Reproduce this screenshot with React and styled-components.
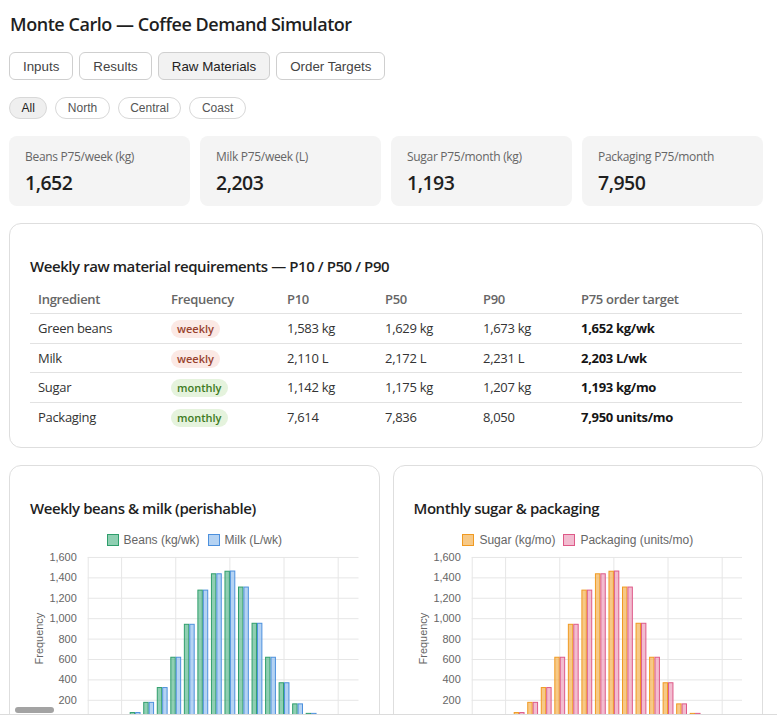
import styled, { createGlobalStyle } from "styled-components";
import { useState } from "react";

const GlobalStyle = createGlobalStyle`
  body {
    margin: 0;
    background: #fff;
    font-family: "Open Sans", "Noto Sans", sans-serif;
    color: #222;
  }
`;

const TABS = ["Inputs", "Results", "Raw Materials", "Order Targets"];
const REGIONS = ["All", "North", "Central", "Coast"];

const STATS = [
  { label: "Beans P75/week (kg)", value: "1,652" },
  { label: "Milk P75/week (L)", value: "2,203" },
  { label: "Sugar P75/month (kg)", value: "1,193" },
  { label: "Packaging P75/month", value: "7,950" },
];

const ROWS = [
  { name: "Green beans", freq: "weekly", p10: "1,583 kg", p50: "1,629 kg", p90: "1,673 kg", target: "1,652 kg/wk" },
  { name: "Milk", freq: "weekly", p10: "2,110 L", p50: "2,172 L", p90: "2,231 L", target: "2,203 L/wk" },
  { name: "Sugar", freq: "monthly", p10: "1,142 kg", p50: "1,175 kg", p90: "1,207 kg", target: "1,193 kg/mo" },
  { name: "Packaging", freq: "monthly", p10: "7,614", p50: "7,836", p90: "8,050", target: "7,950 units/mo" },
];

// histogram counts per bin (20 bins)
const BINS_A = [0, 0, 15, 80, 180, 325, 622, 945, 1280, 1440, 1465, 1310, 955, 622, 372, 165, 72, 0, 0, 0];
const BINS_B = [0, 0, 15, 80, 180, 325, 622, 945, 1280, 1440, 1467, 1310, 955, 622, 372, 165, 72, 0, 0, 0];

const SERIES = {
  beans: { label: "Beans (kg/wk)", fill: "rgba(75,178,130,0.62)", stroke: "#2f9e6c" },
  milk: { label: "Milk (L/wk)", fill: "rgba(150,192,238,0.7)", stroke: "#4c90dd" },
  sugar: { label: "Sugar (kg/mo)", fill: "rgba(244,178,84,0.7)", stroke: "#f09a22" },
  packaging: { label: "Packaging (units/mo)", fill: "rgba(236,160,188,0.7)", stroke: "#de5a88" },
};

const AXIS_FONT = "'Liberation Sans', Arial, sans-serif";

function Histogram({ a, b }) {
  const W = 330;
  const left = 58;
  const right = 330;
  const top = 8;
  const plotH = 164;
  const max = 1600;
  const n = BINS_A.length;
  const cat = (right - left) / n;
  const y = (v) => top + plotH - (v / max) * plotH;
  const ticks = [0, 200, 400, 600, 800, 1000, 1200, 1400, 1600];
  const vlines = [2, 6, 10, 14, 18].map((i) => left + (i + 0.5) * cat);

  return (
    <svg width="100%" height="200" viewBox={`0 0 ${W} 200`} preserveAspectRatio="xMinYMin meet">
      {ticks.map((t) => (
        <g key={t}>
          <line x1={left} x2={right} y1={y(t) + 0.5} y2={y(t) + 0.5} stroke="#e6e6e6" strokeWidth="1" />
          <text x={left - 11} y={y(t) + 4} fontSize="11" fill="#666" textAnchor="end" fontFamily={AXIS_FONT}>
            {t.toLocaleString("en-US")}
          </text>
        </g>
      ))}
      <line x1={left + 0.5} x2={left + 0.5} y1={top} y2={top + plotH} stroke="#e6e6e6" />
      {vlines.map((x) => (
        <line key={x} x1={x} x2={x} y1={top} y2={top + plotH} stroke="#e6e6e6" />
      ))}

      <text
        transform={`translate(13 ${top + 82}) rotate(-90)`}
        fontSize="11"
        fill="#666"
        textAnchor="middle"
        fontFamily={AXIS_FONT}
      >
        Frequency
      </text>

      {BINS_A.map((v, i) => {
        const bw = cat * 0.4;
        const gx = left + i * cat + cat * 0.1;
        const v2 = BINS_B[i];
        return (
          <g key={i}>
            {v > 0 && (
              <rect x={gx + 0.5} y={y(v) + 0.5} width={bw - 1} height={(v / max) * plotH} fill={a.fill} stroke={a.stroke} strokeWidth="1" />
            )}
            {v2 > 0 && (
              <rect x={gx + bw + 0.5} y={y(v2) + 0.5} width={bw - 1} height={(v2 / max) * plotH} fill={b.fill} stroke={b.stroke} strokeWidth="1" />
            )}
          </g>
        );
      })}
    </svg>
  );
}

function ChartPanel({ title, a, b }) {
  return (
    <Card>
      <CardTitle>{title}</CardTitle>
      <Legend>
        {[a, b].map((s) => (
          <LegendItem key={s.label}>
            <Swatch $fill={s.fill} $stroke={s.stroke} />
            {s.label}
          </LegendItem>
        ))}
      </Legend>
      <ChartBox>
        <Histogram a={a} b={b} />
      </ChartBox>
    </Card>
  );
}

export default function App() {
  const [tab, setTab] = useState("Raw Materials");
  const [region, setRegion] = useState("All");

  return (
    <>
      <GlobalStyle />
      <Page>
        <Title>Monte Carlo — Coffee Demand Simulator</Title>

        <TabRow>
          {TABS.map((t) => (
            <TabButton key={t} $active={t === tab} onClick={() => setTab(t)}>
              {t}
            </TabButton>
          ))}
        </TabRow>

        <ChipRow>
          {REGIONS.map((r) => (
            <Chip key={r} $active={r === region} onClick={() => setRegion(r)}>
              {r}
            </Chip>
          ))}
        </ChipRow>

        <Sections>
          <StatGrid>
            {STATS.map((s) => (
              <StatCard key={s.label}>
                <StatLabel>{s.label}</StatLabel>
                <StatValue>{s.value}</StatValue>
              </StatCard>
            ))}
          </StatGrid>

          <Card>
            <CardTitle>Weekly raw material requirements — P10 / P50 / P90</CardTitle>
            <Table>
              <colgroup>
                <col style={{ width: 133 }} />
                <col style={{ width: 116 }} />
                <col style={{ width: 98 }} />
                <col style={{ width: 98 }} />
                <col style={{ width: 98 }} />
                <col />
              </colgroup>
              <thead>
                <tr>
                  <Th>Ingredient</Th>
                  <Th>Frequency</Th>
                  <Th>P10</Th>
                  <Th>P50</Th>
                  <Th>P90</Th>
                  <Th>P75 order target</Th>
                </tr>
              </thead>
              <tbody>
                {ROWS.map((r) => (
                  <tr key={r.name}>
                    <Td>{r.name}</Td>
                    <Td>
                      <Badge $kind={r.freq}>{r.freq}</Badge>
                    </Td>
                    <Td>{r.p10}</Td>
                    <Td>{r.p50}</Td>
                    <Td>{r.p90}</Td>
                    <Td $strong>{r.target}</Td>
                  </tr>
                ))}
              </tbody>
            </Table>
          </Card>

          <ChartGrid>
            <ChartPanel title="Weekly beans & milk (perishable)" a={SERIES.beans} b={SERIES.milk} />
            <ChartPanel title="Monthly sugar & packaging" a={SERIES.sugar} b={SERIES.packaging} />
          </ChartGrid>
        </Sections>
      </Page>
      <BottomBar>
        <ScrollThumb />
      </BottomBar>
    </>
  );
}

const Page = styled.div`
  width: 754px;
  padding: 0 14px 40px 9px;
`;

const Title = styled.h1`
  margin: 12px 0 0 1px;
  font-size: 18px;
  font-weight: 600;
  line-height: 24px;
  letter-spacing: -0.45px;
  color: #1f1f1f;
`;

const TabRow = styled.div`
  display: flex;
  gap: 6px;
  margin-top: 16px;
`;

const TabButton = styled.button`
  height: 28px;
  padding: 0 13px;
  border: 1px solid #cfcfcf;
  border-radius: 6px;
  background: ${(p) => (p.$active ? "#f2f2f2" : "#fff")};
  color: ${(p) => (p.$active ? "#222" : "#444")};
  font-family: "Liberation Sans", Arial, sans-serif;
  font-size: 13.33px;
  cursor: pointer;
`;

const ChipRow = styled.div`
  display: flex;
  gap: 8px;
  margin-top: 17px;
`;

const Chip = styled.button`
  height: 22px;
  padding: 0 11.5px;
  border: 1px solid #d8d8d8;
  border-radius: 11px;
  background: ${(p) => (p.$active ? "#efefef" : "#fff")};
  color: ${(p) => (p.$active ? "#222" : "#555")};
  font-family: "Liberation Sans", Arial, sans-serif;
  font-size: 12px;
  cursor: pointer;
`;

const Sections = styled.div`
  display: flex;
  flex-direction: column;
  gap: 17px;
  margin-top: 17px;
`;

const StatGrid = styled.div`
  display: grid;
  grid-template-columns: repeat(4, 1fr);
  gap: 10px;
`;

const StatCard = styled.div`
  background: #f4f4f4;
  border-radius: 8px;
  padding: 13px 16px 11px;
`;

const StatLabel = styled.div`
  font-size: 12px;
  line-height: 16px;
  letter-spacing: -0.3px;
  color: #666;
`;

const StatValue = styled.div`
  margin-top: 6px;
  font-size: 19.5px;
  line-height: 24px;
  font-weight: 600;
  letter-spacing: -0.5px;
  color: #1f1f1f;
`;

const Card = styled.div`
  border: 1px solid #dedede;
  border-radius: 12px;
  padding: 32px 20px 15px;
  background: #fff;
`;

const CardTitle = styled.h3`
  margin: 0;
  font-size: 15px;
  line-height: 20px;
  font-weight: 600;
  letter-spacing: -0.43px;
  color: #1f1f1f;
`;

const Table = styled.table`
  width: 100%;
  margin-top: 9px;
  border-collapse: collapse;
  table-layout: fixed;
  font-size: 13px;
  letter-spacing: -0.3px;
`;

const Th = styled.th`
  text-align: left;
  padding: 5px 8px;
  line-height: 18px;
  font-weight: 600;
  color: #666;
  border-bottom: 1px solid #e2e2e2;
`;

const Td = styled.td`
  height: 29.5px;
  box-sizing: border-box;
  padding: 0 8px;
  line-height: 18px;
  vertical-align: middle;
  color: ${(p) => (p.$strong ? "#151515" : "#333")};
  font-weight: ${(p) => (p.$strong ? 700 : 400)};
  border-bottom: 1px solid #e2e2e2;

  tr:last-child > & {
    border-bottom: none;
  }
`;

const Badge = styled.span`
  display: inline-block;
  vertical-align: middle;
  padding: 0 6px;
  border-radius: 9px;
  font-size: 11px;
  line-height: 18px;
  font-weight: 600;
  letter-spacing: 0;
  background: ${(p) => (p.$kind === "weekly" ? "#fbe9e5" : "#e5f3dd")};
  color: ${(p) => (p.$kind === "weekly" ? "#97402c" : "#3d7a22")};
`;

const ChartGrid = styled.div`
  display: grid;
  grid-template-columns: 1fr 1fr;
  gap: 13px;
`;

const Legend = styled.div`
  display: flex;
  justify-content: center;
  gap: 8px;
  margin-top: 15px;
  height: 14px;
`;

const LegendItem = styled.div`
  display: flex;
  align-items: center;
  gap: 5px;
  font-family: "Liberation Sans", Arial, sans-serif;
  font-size: 12px;
  line-height: 14px;
  color: #666;
`;

const Swatch = styled.span`
  width: 10px;
  height: 10px;
  background: ${(p) => p.$fill};
  border: 1px solid ${(p) => p.$stroke};
`;

const ChartBox = styled.div`
  margin-top: 2px;
`;

const BottomBar = styled.div`
  position: fixed;
  left: 0;
  right: 0;
  bottom: 0;
  height: 2px;
  background: #fff;
  border-top: 1px solid #dcdcdc;
`;

const ScrollThumb = styled.div`
  position: absolute;
  left: 15px;
  bottom: 4px;
  width: 39px;
  height: 6px;
  border-radius: 3px;
  background: #a3a3a3;
`;
